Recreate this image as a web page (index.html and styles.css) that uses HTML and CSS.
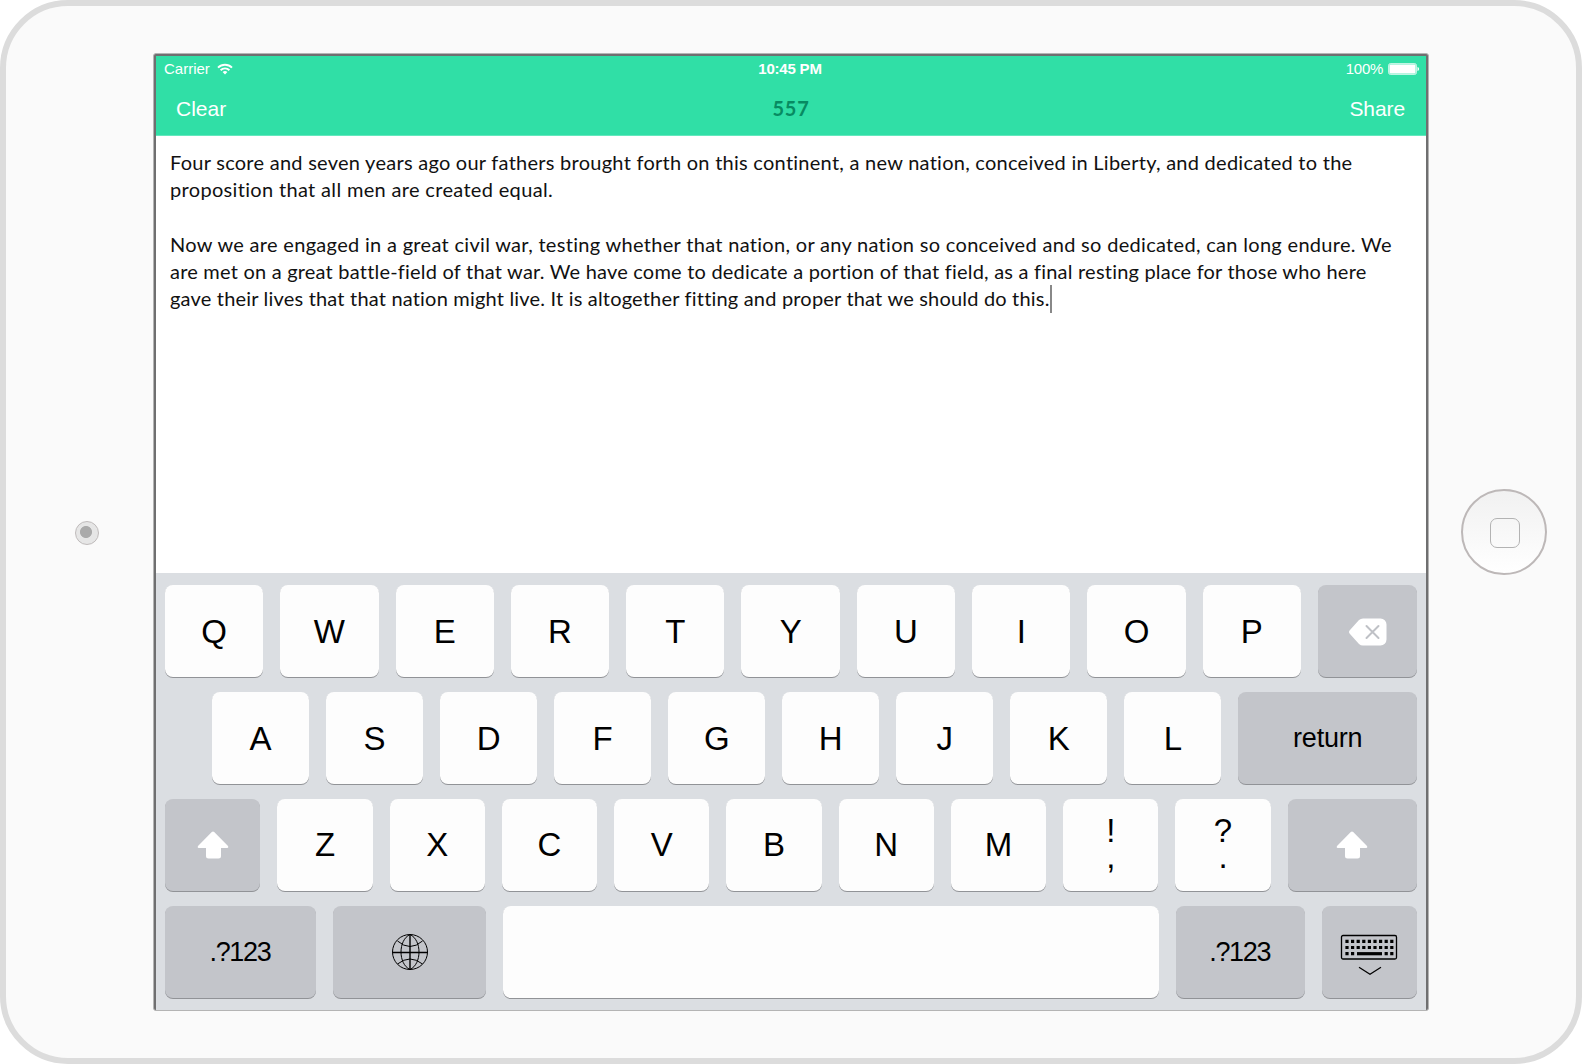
FILE: index.html
```html
<!DOCTYPE html>
<html lang="en">
<head>
<meta charset="utf-8">
<title>Character counter</title>
<link rel="stylesheet" href="styles.css">
</head>
<body>
<div class="tablet">
  <div class="side"><span class="camera"></span></div>
  <main class="screen">
    <header class="header">
      <div class="status">
        <div class="carrier">Carrier
          <svg class="wifi" viewBox="0 0 16 12" width="16" height="12" fill="none" stroke="#fff" stroke-width="1.9"><path d="M1 4.6a10 10 0 0 1 14 0M3.6 7.2a6.3 6.3 0 0 1 8.8 0"/><path d="M8 11.4 5.6 9.1a3.4 3.4 0 0 1 4.8 0z" fill="#fff" stroke="none"/></svg>
        </div>
        <div class="time">10:45 PM</div>
        <div class="power">100%
          <svg class="battery" viewBox="0 0 31 12" width="31" height="12"><rect x=".5" y=".5" width="28" height="11" rx="2" fill="#fff" fill-opacity=".3" stroke="#fff" stroke-opacity=".65"/><rect x="1.5" y="1.5" width="26" height="9" rx="1" fill="#fff"/><path d="M29.5 4c2 .6 2 3.400 0 4z" fill="#fff"/></svg>
        </div>
      </div>
      <nav class="nav"><a class="clear">Clear</a><strong class="count">557</strong><a class="share">Share</a></nav>
    </header>
    <section class="editor">
      <p><span class="line l1">Four score and seven years ago our fathers brought forth on this continent, a new nation, conceived in Liberty, and dedicated to the</span><span class="line l2">proposition that all men are created equal.</span></p>
      <p><span class="line l3">Now we are engaged in a great civil war, testing whether that nation, or any nation so conceived and so dedicated, can long endure. We</span><span class="line l4">are met on a great battle-field of that war. We have come to dedicate a portion of that field, as a final resting place for those who here</span><span class="line l5">gave their lives that that nation might live. It is altogether fitting and proper that we should do this.<i class="caret"></i></span></p>
    </section>
    <section class="keyboard">
      <div class="row row1">
        <div class="key">Q</div><div class="key">W</div><div class="key">E</div><div class="key">R</div><div class="key">T</div><div class="key">Y</div><div class="key">U</div><div class="key">I</div><div class="key">O</div><div class="key">P</div>
        <div class="key dark"><svg class="backspace" viewBox="0 0 38 28" width="38" height="28"><path d="M14 .5h17.500a6 6 0 0 1 6 6v15a6 6 0 0 1-6 6H14q-2.300 0-4-1.600L1 16q-2-2 0-4l9-9.900Q11.700.5 14 .5z" fill="#fff"/><path d="m17.500 8 12 12m0-12-12 12" stroke="#bfc1c6" stroke-width="2" stroke-linecap="round"/></svg></div>
      </div>
      <div class="row row2">
        <div class="key">A</div><div class="key">S</div><div class="key">D</div><div class="key">F</div><div class="key">G</div><div class="key">H</div><div class="key">J</div><div class="key">K</div><div class="key">L</div><div class="key dark return">return</div>
      </div>
      <div class="row row3">
        <div class="key dark"><svg class="shift" viewBox="0 0 32 28" width="32" height="28"><path d="M14.800 1q1.200-1 2.400 0L31 15q1 1.600-.6 2H24v8q0 2.500-2.500 2.500h-10Q9 27.500 9 25v-8H1.500Q0 16.600 1 15z" fill="#fff"/></svg></div>
        <div class="key">Z</div><div class="key">X</div><div class="key">C</div><div class="key">V</div><div class="key">B</div><div class="key">N</div><div class="key">M</div><div class="key pair"><span>!</span><span>,</span></div><div class="key pair"><span>?</span><span>.</span></div>
        <div class="key dark wide"><svg class="shift" viewBox="0 0 32 28" width="32" height="28"><path d="M14.800 1q1.200-1 2.400 0L31 15q1 1.600-.6 2H24v8q0 2.500-2.500 2.500h-10Q9 27.500 9 25v-8H1.500Q0 16.600 1 15z" fill="#fff"/></svg></div>
      </div>
      <div class="row row4">
        <div class="key dark num">.?123</div>
        <div class="key dark"><svg class="globe" viewBox="0 0 38 38" width="38" height="38" fill="none" stroke="#000"><circle cx="19" cy="19" r="17.500"/><path d="M19 1.500v35M1.500 19.500h35" stroke-width="1.400"/><path d="M19 1.500C7 7 7 31 19 36.500M19 1.500c12 5.500 12 29.500 0 35M6.500 8q12.500 11 25 0M6.500 31q12.500-10 25 0"/></svg></div>
        <div class="key space"></div>
        <div class="key dark num">.?123</div>
        <div class="key dark"><svg class="hide" viewBox="0 0 58 42" width="58" height="42" fill="none" stroke="#000"><rect x="1.500" y="1.500" width="55" height="23.500" rx="1.500" stroke-width="1.300"/><path d="M5.400 7.300h48.200M5.400 13.500h48.200" stroke-width="3.200" stroke-dasharray="3.200 2.400"/><path d="M5.400 19.700h9M44.600 19.700h9" stroke-width="3.200" stroke-dasharray="3.200 2.400"/><path d="M17 19.700h25" stroke-width="3.200"/><path d="M19 33.200 30 40.300 41 33.200" stroke-width="1.200"/></svg></div>
      </div>
    </section>
  </main>
  <div class="side"><span class="home"><span class="home-mark"></span></span></div>
</div>
</body>
</html>
```
FILE: styles.css
```css
* { box-sizing: border-box; }
body { margin: 0; background: #fff; font-family: "Liberation Sans", Arial, sans-serif; }
.tablet {
  width: 1582px; height: 1064px; display: grid; grid-template-columns: 147px 1276px 147px;
  border: 6px solid #dcdcdc; border-radius: 68px; background: #fafafa;
}
.side { display: flex; align-items: center; justify-content: center; }
.camera {
  width: 24px; height: 24px; margin-left: 15px; margin-top: 2px; border: 1px solid #bfbbbb; border-radius: 50%;
  background: radial-gradient(circle at 10px 10px, #aaa 0 5.600px, #e6e6e6 6.400px);
}
.home {
  width: 86px; height: 86px; margin-left: 2px; border: 2px solid #bdb8b8; border-radius: 50%;
  background: linear-gradient(#f1f1f1, #fff); display: grid; place-items: center;
}
.home-mark { width: 30px; height: 30px; margin: 2px 0 0 2px; border: 1px solid #b3b3b3; border-radius: 7px; }
.screen {
  margin-top: 47px; height: 958px; display: flex; flex-direction: column;
  border: 1px solid #b4b4b4; border-radius: 3px; padding: 2px 2px 0; background: #6f6f70;
}
.header { height: 80px; background: #30dfa6; border-bottom: 1px solid #63e8bd; color: #fff; }
.status { height: 26px; display: grid; grid-template-columns: 1fr 1fr 1fr; font-size: 15px; line-height: 25px; padding: 0 7px 0 8px; }
.carrier, .power { display: flex; gap: 6px; align-items: center; height: 25px; }
.power { justify-content: flex-end; gap: 5px; letter-spacing: -.3px; }
.wifi { margin-left: 1px; }
.time { text-align: center; font-weight: bold; letter-spacing: -.2px; text-indent: -3px; }
.nav { height: 53px; display: grid; grid-template-columns: 1fr 1fr 1fr; line-height: 53px; font-size: 21px; padding: 0 21px 0 20px; }
.count { text-align: center; font: 700 20px/53px Lato, sans-serif; letter-spacing: .8px; text-indent: 1px; color: #078b62; }
.share { text-align: right; letter-spacing: -.1px; }
.editor { height: 437px; padding: 13px 0 0 14px; background: #fff; color: #111; font: 20px/27.200px Lato, sans-serif; }
.editor p { margin: 0 0 27.200px; }
.line { display: block; white-space: nowrap; font-variant-ligatures: none; }
.l1 { letter-spacing: .26px; }
.l2 { letter-spacing: .33px; }
.l3 { letter-spacing: .31px; }
.l4 { letter-spacing: .21px; }
.l5 { letter-spacing: .19px; }
.caret { display: inline-block; width: 2px; height: 28px; margin: -4px 0 -7px; background: #888; vertical-align: baseline; }
.keyboard { height: 437px; padding: 12px 9px; background: #dbdee2; display: flex; flex-direction: column; gap: 15px; }
.row { display: grid; gap: 17px; height: 92px; }
.row1 { grid-template-columns: repeat(10, 98.300px) 1fr; }
.row2 { grid-template-columns: repeat(9, 97.050px) 1fr; padding-left: 47px; }
.row3 { grid-template-columns: 95.400px repeat(9, 95.250px) 1fr; }
.row4 { grid-template-columns: 151px 152.500px 1fr 129.500px 95px; }
.key {
  display: flex; align-items: center; justify-content: center; border-radius: 8px; padding-top: 1px;
  background: #fdfdfd; box-shadow: 0 1px 0 #919397; color: #000; font-size: 33px;
}
.row3 .key, .row4 .key { padding-top: 0; }
.dark { background: #c3c5ca; }
.return { font-size: 27px; letter-spacing: -.2px; }
.num { font-size: 27px; letter-spacing: -1.300px; padding-right: 1px; }
.row3 .pair { flex-direction: column; line-height: 26px; padding-bottom: 3px; }
.backspace { margin-left: 1px; }
.globe { margin-left: 1px; }
.hide { margin: 5px 2px 0 0; }
```
